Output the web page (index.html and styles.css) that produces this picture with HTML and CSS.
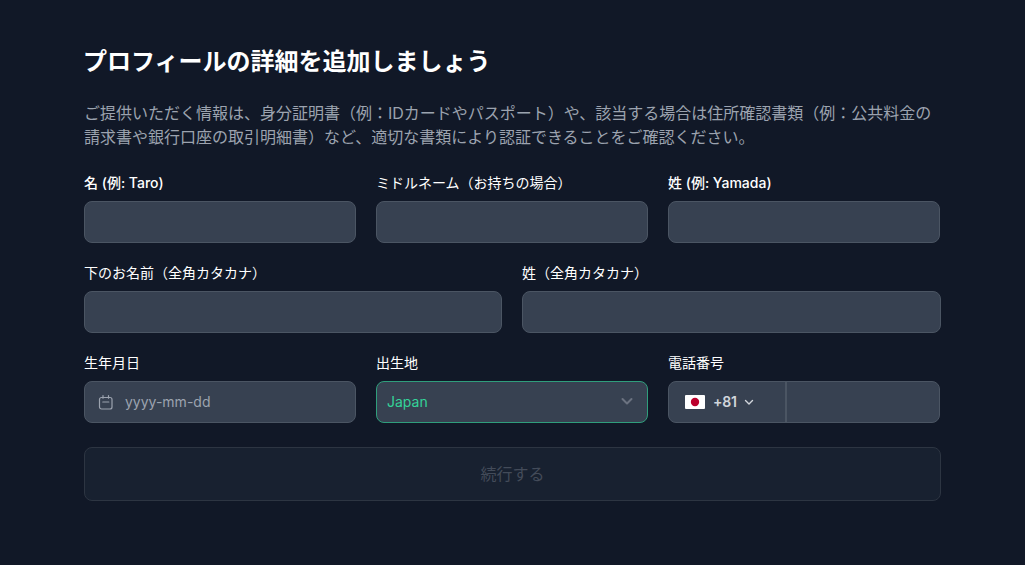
FILE: index.html
```html
<!DOCTYPE html>
<html lang="ja">
<head>
  <meta charset="UTF-8">
  <title>プロフィールの詳細</title>
  <link rel="stylesheet" href="styles.css">
</head>
<body>
  <div class="container">
    <h1>プロフィールの詳細を追加しましょう</h1>
    <p class="intro">ご提供いただく情報は、身分証明書（例：IDカードやパスポート）や、該当する場合は住所確認書類（例：公共料金の請求書や銀行口座の取引明細書）など、適切な書類により認証できることをご確認ください。</p>

    <div class="row three">
      <div class="field">
        <label class="latin">名 (例: Taro)</label>
        <div class="input"></div>
      </div>
      <div class="field">
        <label>ミドルネーム（お持ちの場合）</label>
        <div class="input"></div>
      </div>
      <div class="field">
        <label class="latin">姓 (例: Yamada)</label>
        <div class="input"></div>
      </div>
    </div>

    <div class="row two">
      <div class="field">
        <label>下のお名前（全角カタカナ）</label>
        <div class="input"></div>
      </div>
      <div class="field">
        <label>姓（全角カタカナ）</label>
        <div class="input"></div>
      </div>
    </div>

    <div class="row three">
      <div class="field">
        <label>生年月日</label>
        <div class="input date">
          <svg class="cal" width="16" height="16" viewBox="0 0 16 16" fill="none" stroke="currentColor" stroke-width="1.2" stroke-linecap="round">
            <rect x="1.500" y="3.500" width="12.500" height="11.500" rx="2"/>
            <path d="M5 1.600v2.600M10.500 1.600v2.600M4.800 8h6"/>
          </svg>
          <span>yyyy-mm-dd</span>
        </div>
      </div>
      <div class="field">
        <label>出生地</label>
        <div class="input select">
          <span>Japan</span>
          <svg width="14" height="14" viewBox="0 0 14 14" fill="none" stroke="currentColor" stroke-width="2" stroke-linecap="round" stroke-linejoin="round">
            <path d="M2.500 5l4.500 4.500L11.500 5"/>
          </svg>
        </div>
      </div>
      <div class="field">
        <label>電話番号</label>
        <div class="input phone">
          <div class="code">
            <svg class="flag" width="20" height="14" viewBox="0 0 20 14">
              <rect width="20" height="14" rx="1" fill="#fff"/>
              <circle cx="10" cy="7" r="4.200" fill="#bc002d"/>
            </svg>
            <span>+81</span>
            <svg width="10" height="10" viewBox="0 0 10 10" fill="none" stroke="currentColor" stroke-width="1.400" stroke-linecap="round" stroke-linejoin="round">
              <path d="M1.500 3.500L5 7l3.500-3.500"/>
            </svg>
          </div>
        </div>
      </div>
    </div>

    <button class="submit" disabled>続行する</button>
  </div>
</body>
</html>
```

FILE: styles.css
```css
body {
  margin: 0;
  background: #111827;
  color: #fff;
  font-family: Inter, "Noto Sans CJK JP", sans-serif;
}

.container {
  width: 857px;
  margin-left: 84px;
  padding-top: 46px;
}

h1 {
  margin: 0 0 0 -1px;
  font-size: 24px;
  line-height: 32px;
  font-weight: 700;
}

.intro {
  margin: 23px 0 24px;
  font-size: 16px;
  line-height: 24px;
  color: #9ca3af;
}

.row {
  display: grid;
  gap: 20px;
  margin-bottom: 20px;
}

.row.three {
  grid-template-columns: 272px 272px 272px;
}

.row.two {
  grid-template-columns: 418px 419px;
}

label {
  display: block;
  margin-bottom: 8px;
  font-size: 14px;
  line-height: 20px;
  font-weight: 400;
}

label.latin {
  font-weight: 500;
}

.input {
  box-sizing: border-box;
  display: flex;
  align-items: center;
  height: 42px;
  padding: 0 10px 2px;
  background: #374151;
  border: 1px solid #4b5563;
  border-radius: 8px;
  font-size: 14px;
}

.date {
  padding-left: 13px;
  color: #9ca3af;
}

.date .cal {
  margin: 2px 11px 0 0;
}

.select {
  justify-content: space-between;
  padding-right: 13px;
  border-color: #2f9e7c;
  color: #34d399;
}

.select svg {
  color: #6b7280;
}

.phone {
  padding: 0;
}

.code {
  box-sizing: border-box;
  display: flex;
  align-items: center;
  width: 118px;
  height: 100%;
  padding: 0 0 0 16px;
  border-right: 2px solid #4b5563;
  color: #d1d5db;
  font-weight: 600;
}

.code .flag {
  margin-right: 8px;
}

.code span {
  margin: 0 7px 2px 0;
  letter-spacing: -0.2px;
}

.submit {
  display: block;
  box-sizing: border-box;
  width: 100%;
  height: 54px;
  margin-top: 24px;
  padding-bottom: 3px;
  background: #182130;
  border: 1px solid #2d3542;
  border-radius: 8px;
  color: #434b59;
  font-family: inherit;
  font-size: 16px;
  font-weight: 400;
}
```
